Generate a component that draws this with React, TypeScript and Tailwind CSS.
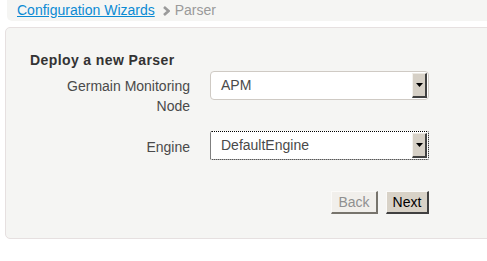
import React from "react";

function Arrow() {
  return (
    <div className="flex w-[15px] items-center justify-center self-stretch border-t border-l border-t-[#ece9e3] border-l-[#f4f2ee] border-r-2 border-b-2 border-r-[#404040] border-b-[#404040] bg-[#d6d0c6]">
      <svg width="7" height="4" viewBox="0 0 7 4">
        <path d="M0 0h7L3.5 4z" fill="#000" />
      </svg>
    </div>
  );
}

function FakeSelect({ value, focused }: { value: string; focused?: boolean }) {
  return (
    <div
      className={
        focused
          ? "flex h-[29px] w-[219px] items-stretch rounded-[2px] border border-dotted border-black bg-white p-[1px]"
          : "flex h-[29px] w-[219px] items-stretch rounded-[4px] border border-[#cfcac4] bg-white p-[1px]"
      }
    >
      <div className="flex flex-1 items-center pl-[9px] text-[14px] text-[#4a4a4a]">{value}</div>
      <Arrow />
    </div>
  );
}

export default function App() {
  return (
    <div className="h-[261px] w-[487px] overflow-hidden bg-white font-['Liberation_Sans',Arial,sans-serif]">
      <div className="ml-[7px] flex h-[21px] items-center gap-[8px] rounded-bl-[5px] bg-[#f5f5f3] pl-[10px] text-[14px]">
        <a href="#" className="text-[#0b8ad3] underline">
          Configuration Wizards
        </a>
        <div className="flex items-center gap-[5px] text-[#9a9a9a]">
          <svg width="7" height="10" viewBox="0 0 7 10">
            <path d="M1 1L5.5 5L1 9" stroke="#9a9a9a" strokeWidth="2.6" fill="none" />
          </svg>
          <span>Parser</span>
        </div>
      </div>

      <div className="ml-[5px] mt-[6px] flex w-[500px] flex-col rounded-[5px] border border-[#e6e0e0] bg-[#f5f5f3] pb-[24px] pl-[24px] pt-[24px]">
        <h2 className="h-[17px] text-[14px] font-bold leading-[17px] tracking-[0.4px] text-[#333]">
          Deploy a new Parser
        </h2>

        <div className="mt-[2px] grid grid-cols-[160px_219px] gap-x-[20px]">
          <label className="pt-[5px] text-right text-[14px] leading-[20px] text-[#4a4a4a]">
            Germain Monitoring Node
          </label>
          <FakeSelect value="APM" />
        </div>

        <div className="mt-[15px] grid grid-cols-[160px_219px] gap-x-[20px]">
          <label className="pt-[6px] text-right text-[14px] leading-[20px] text-[#4a4a4a]">
            Engine
          </label>
          <FakeSelect value="DefaultEngine" focused />
        </div>

        <div className="mt-[31px] flex w-[399px] justify-end gap-[8px]">
          <button className="h-[23px] w-[47px] border-t border-l border-t-[#fbfaf8] border-l-[#fbfaf8] border-r-2 border-b-2 border-r-[#77746c] border-b-[#77746c] bg-[#f1efeb] text-[14px] text-[#909090]">
            Back
          </button>
          <button className="h-[23px] w-[43px] border-t border-l border-t-[#fbfaf8] border-l-[#fbfaf8] border-r-2 border-b-2 border-r-[#404040] border-b-[#404040] bg-[#d8d2c7] text-[14px] text-black">
            Next
          </button>
        </div>
      </div>
    </div>
  );
}
